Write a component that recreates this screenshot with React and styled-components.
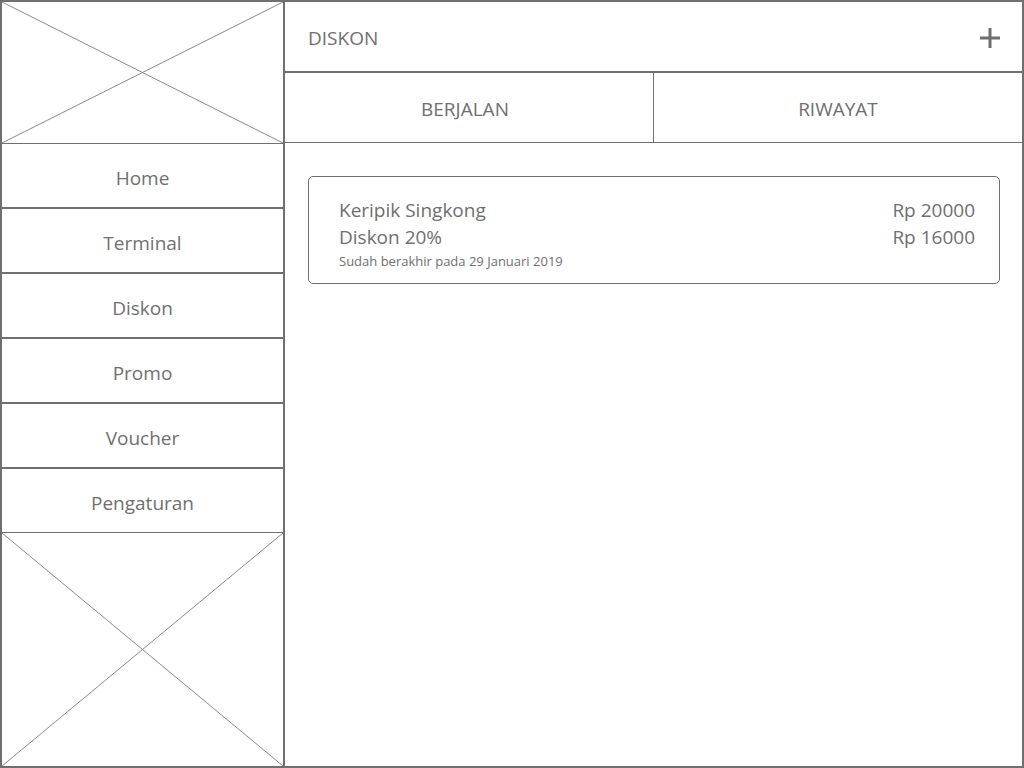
import styled, { createGlobalStyle } from "styled-components";

const GlobalStyle = createGlobalStyle`
    * { box-sizing: border-box; }
    body {
        margin: 0;
        background: #fff;
        font-family: "Open Sans", "Noto Sans", sans-serif;
        color: #6f6f6f;
    }
`;

const line = "#6f6f6f";

const Frame = styled.div`
    width: 1024px;
    height: 768px;
    border: 2px solid ${line};
    display: grid;
    grid-template-columns: 283px 1fr;
    overflow: hidden;
`;

const Sidebar = styled.aside`
    display: flex;
    flex-direction: column;
    min-height: 0;
    border-right: 2px solid ${line};
`;

const Placeholder = styled.div`
    display: flex;
    height: ${(p) => (p.$grow ? "auto" : `${p.$h}px`)};
    flex: ${(p) => (p.$grow ? "1 1 0" : "none")};
    min-height: 0;
    border-top: ${(p) => (p.$top ? `1px solid ${line}` : "none")};
    border-bottom: ${(p) => (p.$bottom ? `1px solid ${line}` : "none")};
    svg {
        display: block;
        flex: 1;
        width: 100%;
        height: auto;
        min-height: 0;
    }
`;

const NavItem = styled.div`
    height: ${(p) => (p.$last ? 63 : 65)}px;
    border-bottom: ${(p) => (p.$last ? "none" : `2px solid ${line}`)};
    display: flex;
    align-items: center;
    justify-content: center;
    padding-top: 4px;
    font-size: 19px;
    color: #707070;
`;

const Main = styled.main`
    display: flex;
    flex-direction: column;
`;

const Header = styled.header`
    height: 71px;
    border-bottom: 2px solid ${line};
    display: flex;
    align-items: center;
    justify-content: space-between;
    padding: 3px 21px 0 23px;
    font-size: 19px;
`;

const Tabs = styled.nav`
    height: 70px;
    border-bottom: 1px solid ${line};
    display: grid;
    grid-template-columns: 369px 1fr;
`;

const Tab = styled.div`
    display: flex;
    align-items: center;
    justify-content: center;
    font-size: 19px;
    padding-top: 3px;
    padding-right: ${(p) => (p.$first ? 8 : 0)}px;
    border-right: ${(p) => (p.$first ? `1px solid ${line}` : "none")};
`;

const Content = styled.section`
    padding: 33px 22px 0 23px;
`;

const Card = styled.div`
    border: 1px solid ${line};
    border-radius: 5px;
    height: 108px;
    padding: 20px 24px 0 30px;
    display: grid;
    grid-template-columns: 1fr auto;
`;

const Lines = styled.div`
    display: flex;
    flex-direction: column;
    align-items: ${(p) => (p.$right ? "flex-end" : "flex-start")};
`;

const Big = styled.div`
    font-size: 19px;
    line-height: 27px;
`;

const Small = styled.div`
    font-size: 13px;
    line-height: 20px;
`;

const Cross = () => (
    <svg viewBox="0 0 100 100" preserveAspectRatio="none">
        <line x1="0" y1="0" x2="100" y2="100" stroke="#8a8a8a" strokeWidth="1" vectorEffect="non-scaling-stroke" />
        <line x1="100" y1="0" x2="0" y2="100" stroke="#8a8a8a" strokeWidth="1" vectorEffect="non-scaling-stroke" />
    </svg>
);

const Plus = () => (
    <svg width="22" height="22" viewBox="0 0 22 22">
        <line x1="11" y1="1" x2="11" y2="21" stroke="#6f6f6f" strokeWidth="3" />
        <line x1="1" y1="11" x2="21" y2="11" stroke="#6f6f6f" strokeWidth="3" />
    </svg>
);

const menu = ["Home", "Terminal", "Diskon", "Promo", "Voucher", "Pengaturan"];

export default function App() {
    return (
        <>
            <GlobalStyle />
            <Frame>
                <Sidebar>
                    <Placeholder $h={142} $bottom>
                        <Cross />
                    </Placeholder>
                    {menu.map((m, i) => (
                        <NavItem key={m} $last={i === menu.length - 1}>
                            {m}
                        </NavItem>
                    ))}
                    <Placeholder $grow $top>
                        <Cross />
                    </Placeholder>
                </Sidebar>
                <Main>
                    <Header>
                        <span>DISKON</span>
                        <Plus />
                    </Header>
                    <Tabs>
                        <Tab $first>BERJALAN</Tab>
                        <Tab>RIWAYAT</Tab>
                    </Tabs>
                    <Content>
                        <Card>
                            <Lines>
                                <Big>Keripik Singkong</Big>
                                <Big>Diskon 20%</Big>
                                <Small>Sudah berakhir pada 29 Januari 2019</Small>
                            </Lines>
                            <Lines $right>
                                <Big>Rp 20000</Big>
                                <Big>Rp 16000</Big>
                            </Lines>
                        </Card>
                    </Content>
                </Main>
            </Frame>
        </>
    );
}
